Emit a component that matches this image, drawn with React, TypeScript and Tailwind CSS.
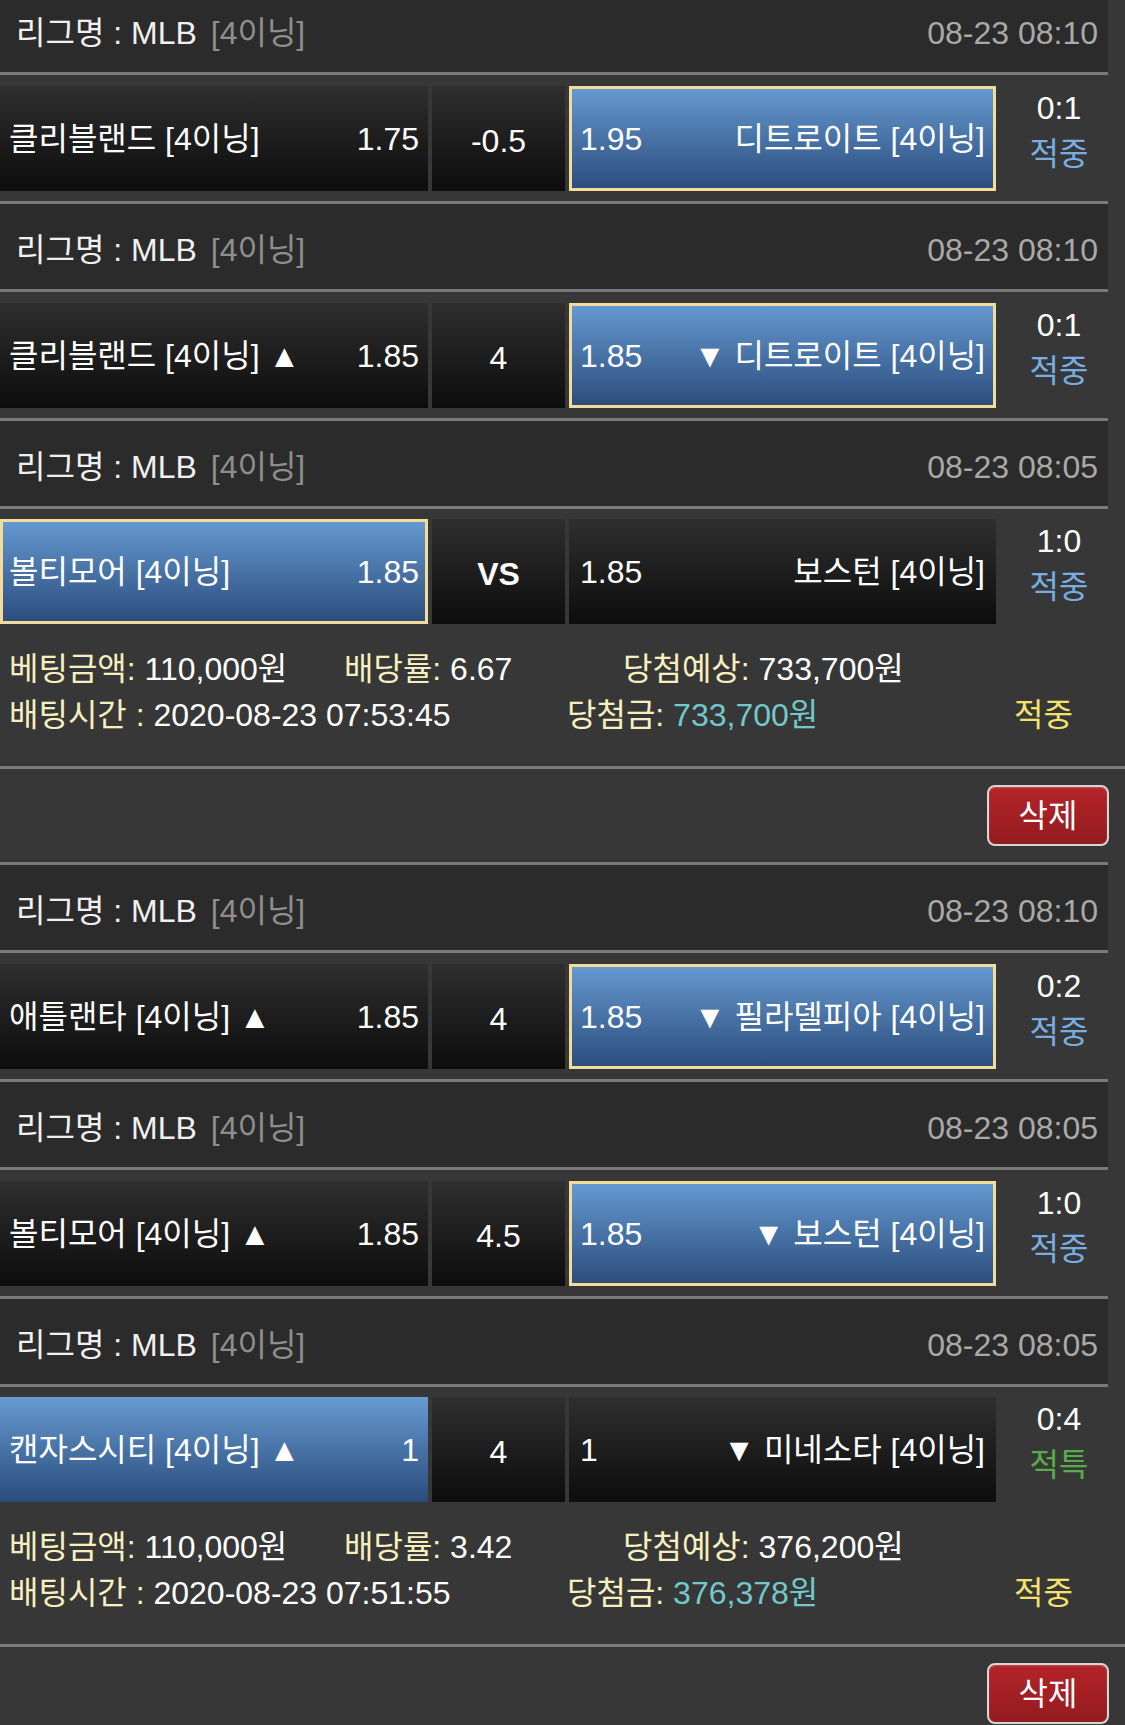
import React from 'react';

type Match = {
  date: string;
  home: string;
  homeOdds: string;
  line: string;
  away: string;
  awayOdds: string;
  pick: 'home' | 'away';
  framed: boolean;
  score: string;
  result: string;
};

type Ticket = {
  matches: Match[];
  amount: string;
  rate: string;
  expected: string;
  time: string;
  won: string;
  status: string;
};

const tickets: Ticket[] = [
  {
    matches: [
      { date: '08-23 08:10', home: '클리블랜드 [4이닝]', homeOdds: '1.75', line: '-0.5', away: '디트로이트 [4이닝]', awayOdds: '1.95', pick: 'away', framed: true, score: '0:1', result: '적중' },
      { date: '08-23 08:10', home: '클리블랜드 [4이닝] ▲', homeOdds: '1.85', line: '4', away: '▼ 디트로이트 [4이닝]', awayOdds: '1.85', pick: 'away', framed: true, score: '0:1', result: '적중' },
      { date: '08-23 08:05', home: '볼티모어 [4이닝]', homeOdds: '1.85', line: 'VS', away: '보스턴 [4이닝]', awayOdds: '1.85', pick: 'home', framed: true, score: '1:0', result: '적중' },
    ],
    amount: '110,000원',
    rate: '6.67',
    expected: '733,700원',
    time: '2020-08-23 07:53:45',
    won: '733,700원',
    status: '적중',
  },
  {
    matches: [
      { date: '08-23 08:10', home: '애틀랜타 [4이닝] ▲', homeOdds: '1.85', line: '4', away: '▼ 필라델피아 [4이닝]', awayOdds: '1.85', pick: 'away', framed: true, score: '0:2', result: '적중' },
      { date: '08-23 08:05', home: '볼티모어 [4이닝] ▲', homeOdds: '1.85', line: '4.5', away: '▼ 보스턴 [4이닝]', awayOdds: '1.85', pick: 'away', framed: true, score: '1:0', result: '적중' },
      { date: '08-23 08:05', home: '캔자스시티 [4이닝] ▲', homeOdds: '1', line: '4', away: '▼ 미네소타 [4이닝]', awayOdds: '1', pick: 'home', framed: false, score: '0:4', result: '적특' },
    ],
    amount: '110,000원',
    rate: '3.42',
    expected: '376,200원',
    time: '2020-08-23 07:51:55',
    won: '376,378원',
    status: '적중',
  },
];

const cellClass = (selected: boolean, framed: boolean) => {
  if (selected) {
    return framed
      ? 'bg-gradient-to-b from-[#679bd3] to-[#2b4c7b] border-[3px] border-[#f1dc9c] bg-origin-border'
      : 'bg-gradient-to-b from-[#679bd3] to-[#2b4c7b] border-[3px] border-transparent bg-origin-border';
  }
  return 'bg-gradient-to-b from-[#2f2f2f] to-[#0d0d0d] border-[3px] border-transparent bg-origin-border';
};

const LeagueHeader = ({ date }: { date: string }) => (
  <div className="w-[1108px] h-[91px] border-y-[3px] border-[#7a7a7a] bg-[#2b2b2b] flex items-center justify-between pl-[16px] pr-[10px] pt-[6px]">
    <div className="flex items-center">
      <span className="text-[#f0f0f0]">리그명 : MLB</span>
      <span className="ml-[14px] text-[#8e8e8e]">[4이닝]</span>
    </div>
    <span className="text-[#a9a9a9]">{date}</span>
  </div>
);

const MatchCells = ({ m }: { m: Match }) => (
  <div className="flex h-[105px] w-[1108px]">
    <div className={`w-[428px] h-full flex items-center justify-between pl-[6px] pr-[6px] text-white ${cellClass(m.pick === 'home', m.framed)}`}>
      <span>{m.home}</span>
      <span>{m.homeOdds}</span>
    </div>
    <div className={`ml-[4px] w-[133px] h-full flex items-center justify-center pt-[4px] text-white ${cellClass(false, false)} ${m.line === 'VS' ? 'font-bold' : ''}`}>
      {m.line}
    </div>
    <div className={`ml-[4px] w-[427px] h-full flex items-center justify-between pl-[8px] pr-[8px] text-white ${cellClass(m.pick === 'away', m.framed)}`}>
      <span>{m.awayOdds}</span>
      <span>{m.away}</span>
    </div>
    <div className="flex-1 flex flex-col items-center pl-[14px] leading-[46px] -mt-[1px]">
      <span className="text-white">{m.score}</span>
      <span className={m.result === '적특' ? 'text-[#5aac4a]' : 'text-[#78ade2]'}>{m.result}</span>
    </div>
  </div>
);

const TicketBlock = ({ t }: { t: Ticket }) => (
  <div>
    {t.matches.map((m, i) => {
      const last = i === t.matches.length - 1;
      return (
        <div key={i}>
          <LeagueHeader date={m.date} />
          <div className={last ? 'pt-[10px]' : 'pt-[11px] h-[126px]'}>
            <MatchCells m={m} />
          </div>
        </div>
      );
    })}

    {/* summary */}
    <div className="pt-[22px] pb-[28px] leading-[46px]">
      <div className="flex">
        <div className="w-[344px] pl-[9px]">
          <span className="text-[#f6efbf]">베팅금액: </span>
          <span className="text-white">{t.amount}</span>
        </div>
        <div className="w-[279px]">
          <span className="text-[#f6efbf]">배당률: </span>
          <span className="text-white">{t.rate}</span>
        </div>
        <div>
          <span className="text-[#f6efbf]">당첨예상: </span>
          <span className="text-white">{t.expected}</span>
        </div>
      </div>
      <div className="flex">
        <div className="w-[567px] pl-[9px]">
          <span className="text-[#f6efbf]">배팅시간 : </span>
          <span className="text-white">{t.time}</span>
        </div>
        <div className="w-[447px]">
          <span className="text-[#f6efbf]">당첨금: </span>
          <span className="text-[#72c9cc]">{t.won}</span>
        </div>
        <span className="text-[#f3e36c]">{t.status}</span>
      </div>
    </div>

    <div className="border-t-[3px] border-[#7a7a7a] h-[96px] flex items-center justify-end pr-[16px]">
      <button className="w-[122px] h-[61px] rounded-[8px] border-2 border-[#d6d6d6] bg-gradient-to-b from-[#b42429] to-[#931b1f] text-white shadow-[inset_0_1px_2px_rgba(255,255,255,0.2)]">
        삭제
      </button>
    </div>
  </div>
);

const App: React.FC = () => {
  return (
    <div className="h-[1725px] w-[1125px] overflow-hidden bg-[#373737] font-['Liberation_Sans','Noto_Sans_CJK_KR',sans-serif] text-[32px] leading-none">
      <div className="-mt-[16px]">
        {tickets.map((t, i) => (
          <TicketBlock key={i} t={t} />
        ))}
      </div>
    </div>
  );
};

export default App;
